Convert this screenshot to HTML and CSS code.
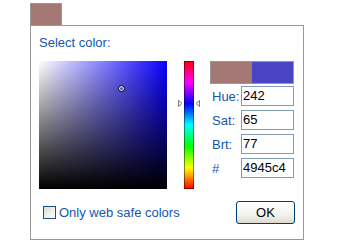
FILE: index.html
```html
<!DOCTYPE html>
<html>
<head>
<meta charset="utf-8">
<link rel="stylesheet" href="styles.css">
</head>
<body>
<div class="swatch"></div>
<div class="panel">
  <div class="title">Select color:</div>
  <div class="main">
    <div class="sv">
      <div class="cursor"></div>
    </div>
    <div class="huecol">
      <div class="huebar"></div>
      <svg class="mark mark-l" width="5" height="7" viewBox="0 0 5 7"><path d="M0.5 0.5 L4 3.5 L0.5 6.5 Z" fill="#fff" stroke="#777" stroke-width="1"/></svg>
      <svg class="mark mark-r" width="5" height="7" viewBox="0 0 5 7"><path d="M4.5 0.5 L1 3.5 L4.5 6.5 Z" fill="#fff" stroke="#777" stroke-width="1"/></svg>
    </div>
    <div class="side">
      <div class="compare"><div class="old"></div><div class="new"></div></div>
      <div class="field"><span class="lbl">Hue:</span><span class="inp">242</span></div>
      <div class="field"><span class="lbl">Sat:</span><span class="inp">65</span></div>
      <div class="field"><span class="lbl">Brt:</span><span class="inp">77</span></div>
      <div class="field"><span class="lbl">#</span><span class="inp">4945c4</span></div>
    </div>
  </div>
  <div class="bottom">
    <label class="check"><span class="box"></span><span>Only web safe colors</span></label>
    <div class="ok">OK</div>
  </div>
</div>
</body>
</html>
```
FILE: styles.css
```css
html, body { margin: 0; padding: 0; background: #fff; }
body {
  font-family: "Liberation Sans", Arial, sans-serif;
  font-size: 13px;
  width: 340px;
  height: 240px;
  overflow: hidden;
}
.swatch {
  margin: 3px 0 0 30px;
  width: 30px;
  height: 21px;
  border: 1px solid #999;
  border-bottom: none;
  background: #a37875;
}
.panel {
  margin-left: 30px;
  width: 274px;
  height: 215px;
  border: 1px solid #999;
  padding: 9px 8px 0 8px;
  box-sizing: border-box;
}
.title {
  color: #1256b0;
  line-height: 15px;
  height: 15px;
  margin-bottom: 11px;
}
.main {
  display: flex;
  align-items: flex-start;
  height: 128px;
}
.sv {
  position: relative;
  width: 128px;
  height: 128px;
  background:
    linear-gradient(to top, #000, rgba(0,0,0,0)),
    linear-gradient(to right, #fff, rgba(255,255,255,0)),
    #0900ff;
}
.cursor {
  position: absolute;
  left: 79px;
  top: 24px;
  width: 5px;
  height: 5px;
  border-radius: 50%;
  border: 1px solid #111;
  box-shadow: inset 0 0 0 1px #fff;
  background: transparent;
}
.huecol {
  position: relative;
  width: 22px;
  height: 128px;
  margin-left: 11px;
  display: flex;
  justify-content: center;
}
.huebar {
  width: 10px;
  height: 128px;
  box-sizing: border-box;
  border: 1px solid rgba(0,0,0,0.45);
  background: linear-gradient(to bottom, #f00 0%, #f0f 16.7%, #00f 33.3%, #0ff 50%, #0f0 66.7%, #ff0 83.3%, #f00 100%);
  background-origin: border-box;
}
.mark { position: absolute; top: 39px; }
.mark-l { left: 0; }
.mark-r { right: 0; }
.side {
  width: 84px;
  margin-left: 10px;
  display: flex;
  flex-direction: column;
  gap: 4px;
}
.compare {
  display: flex;
  height: 23px;
  box-sizing: border-box;
  border: 1px solid #999;
  margin-bottom: -2px;
}
.old { flex: 1; background: #a37875; }
.new { flex: 1; background: #4945c4; }
.field {
  display: flex;
  align-items: center;
  height: 20px;
  padding-left: 2px;
}
.lbl {
  color: #1256b0;
  width: 29px;
}
.inp {
  width: 53px;
  height: 20px;
  box-sizing: border-box;
  border: 1px solid #7f9db9;
  padding-left: 1px;
  line-height: 18px;
  color: #000;
  font-size: 13px;
  background: #fff;
}
.bottom {
  display: flex;
  align-items: center;
  justify-content: space-between;
  margin-top: 12px;
  height: 23px;
}
.check {
  display: flex;
  align-items: center;
  gap: 3px;
  padding-left: 4px;
  color: #1256b0;
}
.box {
  width: 13px;
  height: 13px;
  box-sizing: border-box;
  border: 1px solid #1c5180;
  background: linear-gradient(135deg, #dcdcd6 0%, #fff 100%);
}
.ok {
  width: 59px;
  height: 23px;
  box-sizing: border-box;
  border: 1px solid #003c74;
  border-radius: 3px;
  background: linear-gradient(to bottom, #fff 0%, #f3f3ef 60%, #dcdad0 100%);
  text-align: center;
  line-height: 21px;
  color: #000;
}
```
